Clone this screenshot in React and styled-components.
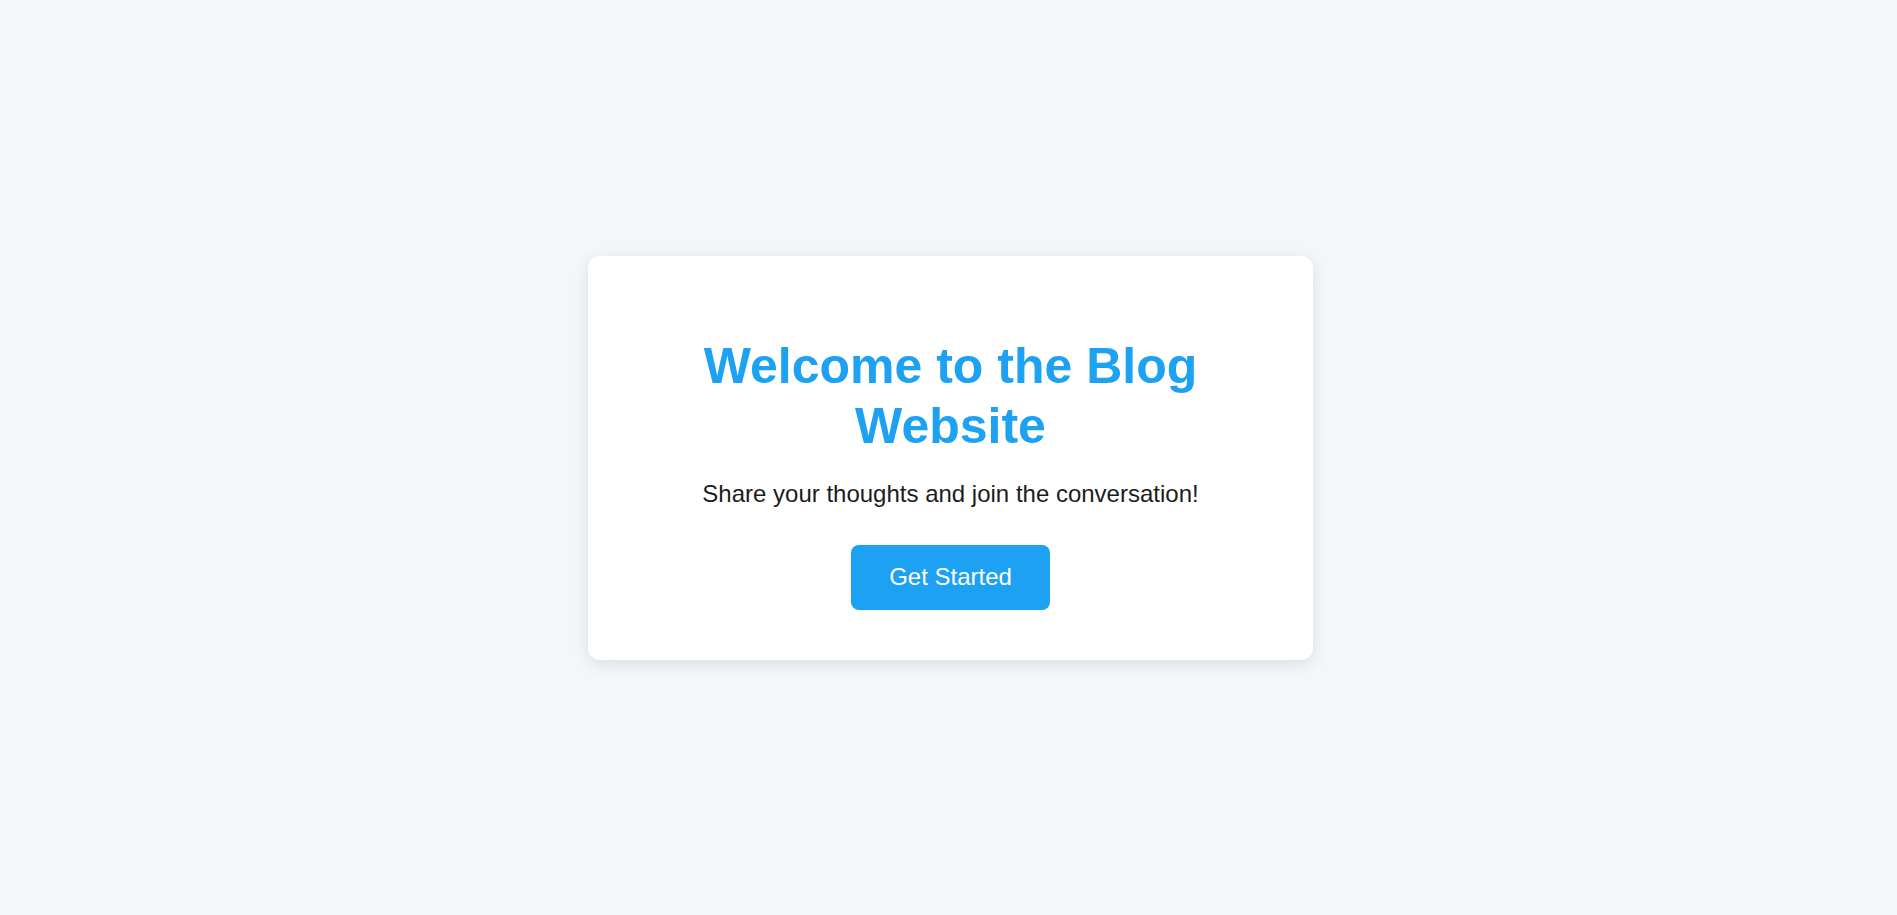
import React from 'react';
import styled, { createGlobalStyle } from 'styled-components';

const GlobalStyle = createGlobalStyle`
  html, body {
    margin: 0;
    padding: 0;
    background: #f4f7fa;
    font-family: "Liberation Sans", Arial, sans-serif;
  }
`;

const Page = styled.main`
  min-height: 100vh;
  display: flex;
  align-items: center;
  justify-content: center;
  padding-left: 4px;
  box-sizing: border-box;
`;

const Card = styled.section`
  width: 725px;
  box-sizing: border-box;
  padding: 50px;
  background: #ffffff;
  border-radius: 12px;
  box-shadow: 0 4px 16px rgba(0, 0, 0, 0.1);
  text-align: center;
`;

const Title = styled.h1`
  margin: 30px 0 24px;
  font-size: 50px;
  line-height: 60px;
  font-weight: 700;
  color: #1da1f2;
`;

const Subtitle = styled.p`
  margin: 0 0 37px;
  font-size: 24px;
  color: #1c1c1c;
`;

const Button = styled.button`
  display: inline-block;
  padding: 18.5px 38px;
  border: none;
  border-radius: 8px;
  background: #1da1f2;
  color: #fff;
  font-family: inherit;
  font-size: 24px;
  line-height: normal;
  cursor: pointer;
  transition: background 0.2s ease;

  &:hover {
    background: #0d8ddb;
  }
`;

export default function App() {
  return (
    <>
      <GlobalStyle />
      <Page>
        <Card>
          <Title>Welcome to the Blog Website</Title>
          <Subtitle>Share your thoughts and join the conversation!</Subtitle>
          <Button>Get Started</Button>
        </Card>
      </Page>
    </>
  );
}
